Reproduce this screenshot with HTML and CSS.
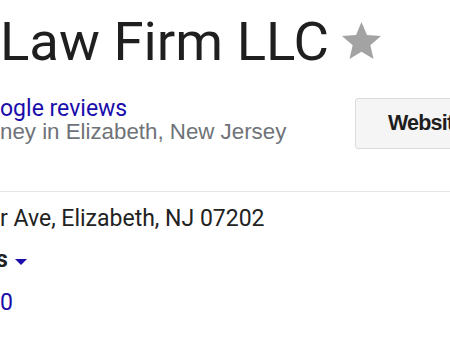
FILE: index.html
```html
<!DOCTYPE html>
<html>
<head>
<meta charset="utf-8">
<link rel="stylesheet" href="styles.css">
</head>
<body>
<div class="panel">
  <div class="title-row">
    <h1 class="title">Law Firm LLC</h1>
    <svg class="star" viewBox="2 2 20 19" width="39" height="37" aria-hidden="true"><path d="M12 17.27L18.18 21l-1.64-7.03L22 9.24l-7.19-.61L12 2 9.19 8.63 2 9.24l5.46 4.73L5.82 21z" fill="#a3a3a3"/></svg>
  </div>
  <div class="info-row">
    <div class="info">
      <a class="reviews" href="#">ogle reviews</a>
      <div class="category">ney in Elizabeth, New Jersey</div>
    </div>
    <div class="btn">Websit</div>
  </div>
  <hr class="divider">
  <div class="address">r Ave, Elizabeth, NJ 07202</div>
  <div class="hours"><span class="hours-label">s</span><span class="caret"></span></div>
  <div class="phone"><a href="#">0</a></div>
</div>
</body>
</html>
```
FILE: styles.css
```css
html, body {
  margin: 0;
  padding: 0;
  background: #fff;
  overflow: hidden;
}
.panel {
  width: 485px;
  font-family: Roboto, "Liberation Sans", sans-serif;
  color: #222;
}
.title-row {
  display: flex;
  align-items: center;
  gap: 13px;
  margin-top: 11px;
  height: 60px;
}
.title {
  margin: 0;
  font-family: Roboto, sans-serif;
  font-weight: 400;
  font-size: 54.5px;
  line-height: 60px;
  color: #1f1f1f;
  white-space: nowrap;
}
.star {
  display: block;
  margin-top: -2px;
}
.info-row {
  display: flex;
  align-items: flex-start;
  margin-top: 26px;
}
.info {
  flex: 1;
}
.reviews {
  display: block;
  font-family: Roboto, sans-serif;
  font-size: 23px;
  line-height: 23px;
  color: #1a0dab;
  text-decoration: none;
  white-space: nowrap;
}
.category {
  font-family: "Liberation Sans", Arial, sans-serif;
  font-size: 22.3px;
  line-height: 23px;
  color: #6f7378;
  white-space: nowrap;
}
.btn {
  flex: none;
  box-sizing: border-box;
  width: 130px;
  height: 51px;
  margin-top: 1px;
  border: 1px solid #dcdcdc;
  border-radius: 3px;
  background: #f5f5f5;
  padding-left: 32px;
  font-family: "Liberation Sans", Arial, sans-serif;
  font-weight: 700;
  font-size: 21.5px;
  letter-spacing: -0.8px;
  line-height: 49px;
  color: #1e1e1e;
  white-space: nowrap;
}
.divider {
  margin: 42px 0 0 0;
  border: 0;
  height: 1px;
  background: #e6e6e6;
}
.address {
  margin-top: 14px;
  font-size: 23px;
  line-height: 26px;
  color: #222;
  white-space: nowrap;
}
.hours {
  display: flex;
  align-items: center;
  margin-top: 15px;
  font-size: 23px;
  line-height: 26px;
  height: 26px;
}
.hours-label {
  font-weight: 700;
  color: #222;
  margin-left: -4px;
}
.caret {
  width: 0;
  height: 0;
  margin-left: 7px;
  margin-top: 4px;
  border-left: 6px solid transparent;
  border-right: 6px solid transparent;
  border-top: 6px solid #1a0dab;
}
.phone {
  margin-top: 17px;
  font-size: 23px;
  line-height: 26px;
}
.phone a {
  color: #1a0dab;
  text-decoration: none;
}
```
